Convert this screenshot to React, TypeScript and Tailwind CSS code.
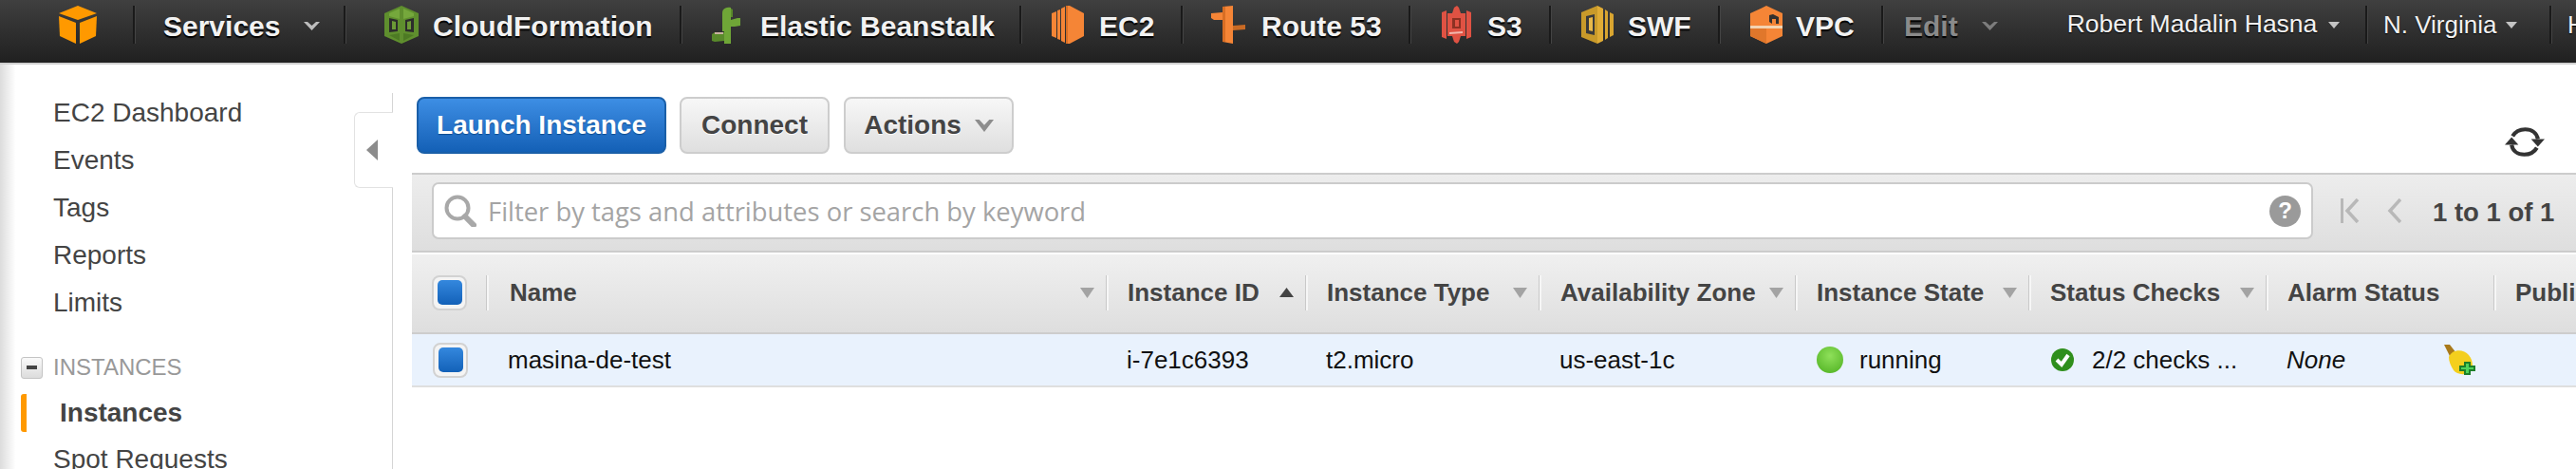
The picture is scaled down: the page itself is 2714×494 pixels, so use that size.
import type { ReactNode } from "react";

function Cube() {
  return (
    <svg width="40" height="40" viewBox="0 0 40 40">
      <path d="M20 0 L40 8 L20 15 L0 8 Z" fill="#f90" />
      <path d="M0 11 L18 18 V40 L1 32 Z" fill="#f90" />
      <path d="M40 11 L22 18 V40 L39 32 Z" fill="#f90" />
    </svg>
  );
}

function CloudFormationIcon() {
  return (
    <svg width="36" height="40" viewBox="0 0 36 40">
      <path d="M18 0 L36 8 V32 L18 40 L0 32 V8 Z" fill="#5f8f2e" />
      <path d="M16 3 V14 L5 11 V8 Z M20 3 V14 L31 11 V8 Z" fill="#75a83c" />
      <path d="M5 13 L14 15 V27 L5 28 Z M22 15 L31 13 V28 L22 27 Z" fill="#2c2c2c" />
      <path d="M8 16 L12 17 V25 L8 25 Z M24 17 L28 16 V25 L24 25 Z" fill="#6c9a36" />
      <path d="M16 29 L5 31 L16 37 Z M20 29 L31 31 L20 37 Z" fill="#4d7a24" />
    </svg>
  );
}

function BeanstalkIcon() {
  return (
    <svg width="30" height="40" viewBox="0 0 30 40">
      <path d="M11 8 C11 3 15 1 20 2 L20 40 L13 40 L13 27 L11 27 Z" fill="#6fa637" />
      <path d="M20 3 L22 4 V12 L20 12 Z" fill="#598a2b" />
      <path d="M20 15 L27 13 H30 V21 L24 22 L20 22 Z" fill="#6fa637" />
      <path d="M0 30 L3 28 H13 V37 L3 38 L0 37 Z" fill="#598a2b" />
      <path d="M3 28 H12 L12 30 H3 Z" fill="#c9b2a0" />
    </svg>
  );
}

function Ec2Icon() {
  return (
    <svg width="34" height="40" viewBox="0 0 34 40">
      <path d="M15 0 L19 0 L34 8 V32 L19 40 L15 40 Z" fill="#f58536" />
      <path d="M10 3 L14 1 V39 L10 37 Z M6 5 L9 4 V36 L6 35 Z M0 8 L5 6 V34 L0 32 Z" fill="#f58536" />
      <path d="M15 0 L17 0 V40 L15 40 Z" fill="#d86e24" />
    </svg>
  );
}

function RouteIcon() {
  return (
    <svg width="36" height="40" viewBox="0 0 36 40">
      <path d="M12 1 L23 0 V40 L12 38 Z" fill="#f58536" />
      <path d="M0 8 L12 7 V15 L3 15 L0 13 Z" fill="#f58536" />
      <path d="M23 21 L36 20 V25 L23 26 Z" fill="#c96a24" />
      <path d="M12 1 L15 1 V38 L12 38 Z" fill="#d86e24" />
    </svg>
  );
}

function S3Icon() {
  return (
    <svg width="31" height="40" viewBox="0 0 31 40">
      <path d="M0 7 L5 5 V35 L0 33 Z M31 7 L26 5 V35 L31 33 Z" fill="#e05243" />
      <path d="M6 8 L11 8 L13 2 L16 0 L18 2 L20 8 H25 V32 H20 L18 38 L16 40 L13 38 L11 32 H6 Z" fill="#e05243" />
      <path d="M11 13 H20 V24 H11 Z" fill="#8c3123" />
      <path d="M14 15 H18 V22 H14 Z" fill="#e05243" />
      <path d="M8 28 L22 27 V29 L8 30 Z" fill="#f2b8ae" />
    </svg>
  );
}

function SwfIcon() {
  return (
    <svg width="34" height="40" viewBox="0 0 34 40">
      <path d="M0 7 L17 0 V40 L0 33 Z" fill="#c99a2a" />
      <path d="M17 0 L23 3 V37 L17 40 Z" fill="#e0ac35" />
      <path d="M25 4 L28 6 V34 L25 36 Z M30 7 L34 9 V31 L30 33 Z" fill="#d9a530" />
      <path d="M5 11 L14 9 V31 L5 29 Z" fill="#3a3a3a" />
      <path d="M8 13 L12 12 V27 L8 26 Z" fill="#e8b94a" />
    </svg>
  );
}

function VpcIcon() {
  return (
    <svg width="34" height="40" viewBox="0 0 34 40">
      <path d="M11 3 L17 0 L34 8 V32 L17 40 L0 32 V8 L11 3 Z" fill="#f58536" />
      <path d="M17 0 V21 H0 V32 L17 40 Z" fill="#e0772b" />
      <path d="M20 17 V10 L24 9 L30 12 V19 H27 V14 H23 V19 Z" fill="#33302e" />
      <path d="M0 21 H34 V24 H0 Z" fill="#f4d3b0" />
    </svg>
  );
}

function Chevron({ color = "#c8c8c8", w = 17, h = 9 }: { color?: string; w?: number; h?: number }) {
  return (
    <svg width={w} height={h} viewBox="0 0 17 9" preserveAspectRatio="none">
      <path d="M0 0 H4 L8.5 4 L13 0 H17 L8.5 9 Z" fill={color} />
    </svg>
  );
}

function Caret() {
  return (
    <svg width="12" height="7" viewBox="0 0 12 7">
      <path d="M0 0 H12 L6 7 Z" fill="#c4c4c4" />
    </svg>
  );
}

function NavItem({
  icon,
  label,
  width,
  pl,
  gap,
}: {
  icon: ReactNode;
  label: string;
  width: string;
  pl: string;
  gap: string;
}) {
  return (
    <div className={`flex h-[40px] shrink-0 items-center border-l-2 border-[#1a1a1a] shadow-[inset_1px_0_0_#444] ${width} ${pl} ${gap}`}>
      {icon}
      <span className="mt-[3px] text-[30px] font-bold text-[#f2f2f2] [text-shadow:0_2px_1px_#000]">{label}</span>
    </div>
  );
}

function TopBar() {
  return (
    <header className="flex h-[68px] shrink-0 items-start overflow-hidden border-b-2 border-[#cfcfcf] bg-linear-to-b from-[#404040] to-[#202020] pt-[6px]">
      <div className="flex h-[40px] w-[140px] shrink-0 items-center pl-[62px]">
        <Cube />
      </div>
      <div className="flex h-[40px] w-[222px] shrink-0 items-center border-l-2 border-[#1a1a1a] pl-[30px] shadow-[inset_1px_0_0_#444]">
        <span className="mt-[3px] text-[30px] font-bold text-[#f2f2f2] [text-shadow:0_2px_1px_#000]">Services</span>
        <span className="ml-[25px] mt-[3px] flex"><Chevron color="#bdbdbd" /></span>
      </div>
      <NavItem icon={<CloudFormationIcon />} label="CloudFormation" width="w-[354px]" pl="pl-[41px]" gap="gap-[15px]" />
      <NavItem icon={<BeanstalkIcon />} label="Elastic Beanstalk" width="w-[358px]" pl="pl-[32px]" gap="gap-[21px]" />
      <NavItem icon={<Ec2Icon />} label="EC2" width="w-[170px]" pl="pl-[32px]" gap="gap-[16px]" />
      <NavItem icon={<RouteIcon />} label="Route 53" width="w-[240px]" pl="pl-[30px]" gap="gap-[17px]" />
      <NavItem icon={<S3Icon />} label="S3" width="w-[148px]" pl="pl-[33px]" gap="gap-[17px]" />
      <NavItem icon={<SwfIcon />} label="SWF" width="w-[178px]" pl="pl-[32px]" gap="gap-[15px]" />
      <NavItem icon={<VpcIcon />} label="VPC" width="w-[172px]" pl="pl-[32px]" gap="gap-[14px]" />
      <div className="flex h-[40px] w-[510px] shrink-0 items-center border-l-2 border-[#1a1a1a] pl-[22px] shadow-[inset_1px_0_0_#444]">
        <span className="mt-[3px] text-[30px] font-bold text-[#8a8a8a] [text-shadow:0_2px_1px_#000]">Edit</span>
        <span className="ml-[25px] mt-[3px] flex"><Chevron color="#7c7c7c" /></span>
        <span className="ml-[73px] text-[26.5px] text-[#f2f2f2] [text-shadow:0_1px_1px_#000]">Robert Madalin Hasna</span>
        <span className="ml-[12px] flex"><Caret /></span>
      </div>
      <div className="flex h-[40px] w-[194px] shrink-0 items-center border-l-2 border-[#1a1a1a] pl-[17px] shadow-[inset_1px_0_0_#444]">
        <span className="text-[26px] text-[#f2f2f2] [text-shadow:0_1px_1px_#000]">N. Virginia</span>
        <span className="ml-[10px] flex"><Caret /></span>
      </div>
      <div className="flex h-[40px] shrink-0 items-center border-l-2 border-[#1a1a1a] pl-[17px] shadow-[inset_1px_0_0_#444]">
        <span className="text-[26px] text-[#f2f2f2] [text-shadow:0_1px_1px_#000]">Help</span>
      </div>
    </header>
  );
}

function SideLink({ label }: { label: string }) {
  return <div className="flex h-[50px] items-center pl-[56px] text-[28px] text-[#444]">{label}</div>;
}

function Sidebar() {
  return (
    <aside className="relative w-[414px] shrink-0 bg-linear-to-r from-[#dcdcdc] via-white via-[4%] to-white pt-[26px]">
      <SideLink label="EC2 Dashboard" />
      <SideLink label="Events" />
      <SideLink label="Tags" />
      <SideLink label="Reports" />
      <SideLink label="Limits" />
      <div className="mb-[3px] mt-[22px] flex h-[42px] items-center gap-[11px] pl-[22px]">
        <span className="flex h-[23px] w-[23px] items-center justify-center rounded-[3px] border border-[#c4c4c4] bg-linear-to-b from-[#fafafa] to-[#dcdcdc]">
          <span className="h-[4px] w-[11px] bg-[#444]" />
        </span>
        <span className="text-[24px] text-[#999]">INSTANCES</span>
      </div>
      <div className="flex h-[48px] items-center pl-[22px]">
        <span className="h-[40px] w-[6px] rounded-l-[3px] bg-[#f90]" />
        <span className="ml-[35px] text-[28px] font-bold text-[#444]">Instances</span>
      </div>
      <SideLink label="Spot Requests" />

      {/* divider starts below the top of the column */}
      <div className="absolute bottom-0 right-0 top-[30px] w-px bg-[#d5d5d5]" />
      <div className="absolute left-[373px] top-[50px] flex h-[80px] w-[41px] items-center justify-center rounded-l-[6px] border border-r-0 border-[#e2e2e2] bg-white">
        <svg width="12" height="22" viewBox="0 0 12 22" className="mr-[4px]">
          <path d="M12 0 V22 L0 11 Z" fill="#8c8c8c" />
        </svg>
      </div>
    </aside>
  );
}

function ToolButton({ children }: { children: ReactNode }) {
  return (
    <button className="flex h-[60px] items-center rounded-[8px] border-2 border-[#cdcdcd] bg-linear-to-b from-[#f7f7f7] to-[#dfdfdf] text-[28px] font-bold text-[#444] [text-shadow:0_1px_0_#fff]">
      {children}
    </button>
  );
}

function Toolbar() {
  return (
    <div className="flex h-[114px] shrink-0 items-start justify-between pl-[5px] pr-[33px] pt-[34px]">
      <div className="flex">
        <button className="flex h-[60px] w-[263px] items-center justify-center rounded-[8px] border-2 border-[#1a5fa8] bg-linear-to-b from-[#3d8ee4] to-[#1360b6] text-[28px] font-bold text-white [text-shadow:0_1px_1px_#0d4a8c]">
          Launch Instance
        </button>
        <div className="ml-[14px]">
          <ToolButton>
            <span className="w-[154px] text-center">Connect</span>
          </ToolButton>
        </div>
        <div className="ml-[15px]">
          <ToolButton>
            <span className="flex w-[175px] items-center justify-center gap-[14px]">
              Actions
              <Chevron color="#8d8d8d" w={20} h={13} />
            </span>
          </ToolButton>
        </div>
      </div>
      <svg width="42" height="33" viewBox="0 0 41 32" className="mt-[31px]" fill="none">
        <path d="M8 10 C11 5 16 3 21 3 C28 3 33 7 34 13" stroke="#333" strokeWidth="4" />
        <path d="M27 13 H41 L34 21 Z" fill="#333" />
        <path d="M33 22 C30 27 25 29 20 29 C13 29 8 25 7 19" stroke="#333" strokeWidth="4" />
        <path d="M0 19 H14 L7 11 Z" fill="#333" />
      </svg>
    </div>
  );
}

function FilterBar() {
  return (
    <div className="flex h-[84px] shrink-0 items-start border-y-2 border-[#cccccc] bg-linear-to-b from-[#ededed] to-[#dedede] pl-[21px] pt-[8px]">
      <div className="flex h-[60px] w-[1982px] shrink-0 items-center rounded-[7px] border-2 border-[#cbcbcb] bg-white pl-[11px] pr-[11px]">
        <svg width="34" height="34" viewBox="0 0 34 34" fill="none">
          <circle cx="14" cy="14" r="11.5" stroke="#a8a8a8" strokeWidth="4" />
          <path d="M22 23 L31 32" stroke="#a8a8a8" strokeWidth="6" strokeLinecap="round" />
        </svg>
        <span className="ml-[12px] mt-[2px] flex-1 font-['Open_Sans',sans-serif] text-[27.4px] text-[#a4a4a4]">
          Filter by tags and attributes or search by keyword
        </span>
        <span className="flex h-[33px] w-[33px] items-center justify-center rounded-full bg-[#9a9a9a] text-[24px] font-bold text-white">?</span>
      </div>
      <div className="flex h-[60px] items-center">
        <svg width="20" height="26" viewBox="0 0 20 26" className="ml-[29px]" fill="none">
          <path d="M1.5 0 V26" stroke="#b8b8b8" strokeWidth="3" />
          <path d="M18 1 L7 13 L18 25" stroke="#b8b8b8" strokeWidth="3.5" />
        </svg>
        <svg width="15" height="26" viewBox="0 0 15 26" className="ml-[29px]" fill="none">
          <path d="M14 1 L3 13 L14 25" stroke="#b8b8b8" strokeWidth="3.5" />
        </svg>
        <span className="ml-[33px] mt-[3px] whitespace-nowrap text-[27.5px] font-bold text-[#444]">1 to 1 of 1</span>
      </div>
    </div>
  );
}

function BlueCheck() {
  return (
    <span className="flex h-[37px] w-[37px] items-center justify-center rounded-[8px] border-2 border-[#d2d2d2] bg-[#f4f4f4]">
      <span className="h-[26px] w-[26px] rounded-[5px] bg-linear-to-b from-[#3488de] to-[#1261b8]" />
    </span>
  );
}

function SortArrow({ up = false }: { up?: boolean }) {
  if (up) {
    return (
      <svg width="15" height="10" viewBox="0 0 15 10" className="shrink-0">
        <path d="M7.5 0 L15 10 H0 Z" fill="#444" />
      </svg>
    );
  }
  return (
    <svg width="15" height="11" viewBox="0 0 15 11" className="shrink-0">
      <path d="M0 0 H15 L7.5 11 Z" fill="#a3a3a3" />
    </svg>
  );
}

function HeadCell({ label, sort }: { label: string; sort?: "up" | "down" }) {
  return (
    <div className="flex h-[37px] items-center justify-between overflow-hidden whitespace-nowrap border-l-2 border-[#f6f6f6] pl-[20px] pr-[13px] text-[26px] font-bold text-[#444] shadow-[-1px_0_0_#c9c9c9]">
      <span>{label}</span>
      {sort && <SortArrow up={sort === "up"} />}
    </div>
  );
}

const columns = "grid grid-cols-[79px_653px_210px_246px_270px_246px_250px_240px_1fr]";

function InstanceTable() {
  return (
    <div className="mt-[2px]">
      <div className={`${columns} h-[84px] items-center border-b-2 border-[#cdcdcd] bg-linear-to-b from-[#f0f0f0] to-[#dedede] pb-[2px]`}>
        <div className="pl-[21px]"><BlueCheck /></div>
        <div className="flex h-[37px] items-center justify-between border-l-2 border-[#f6f6f6] pl-[22px] pr-[13px] text-[26px] font-bold text-[#444] shadow-[-1px_0_0_#c9c9c9]">
          <span>Name</span>
          <SortArrow />
        </div>
        <HeadCell label="Instance ID" sort="up" />
        <HeadCell label="Instance Type" sort="down" />
        <HeadCell label="Availability Zone" sort="down" />
        <HeadCell label="Instance State" sort="down" />
        <HeadCell label="Status Checks" sort="down" />
        <HeadCell label="Alarm Status" />
        <HeadCell label="Public DNS" />
      </div>
      <div className={`${columns} h-[56px] items-center border-b-2 border-[#dfdfdf] bg-[#e9f2fd] text-[26px] text-[#111]`}>
        <div className="pl-[22px]"><BlueCheck /></div>
        <div className="pl-[22px]">masina-de-test</div>
        <div className="pl-[21px]">i-7e1c6393</div>
        <div className="pl-[21px]">t2.micro</div>
        <div className="pl-[21px]">us-east-1c</div>
        <div className="flex items-center gap-[17px] pl-[22px]">
          <span className="h-[28px] w-[28px] rounded-full bg-[radial-gradient(circle_at_50%_35%,#8fe05a,#4caf1f)]" />
          running
        </div>
        <div className="flex items-center gap-[19px] whitespace-nowrap pl-[23px]">
          <svg width="24" height="24" viewBox="0 0 24 24" className="shrink-0">
            <circle cx="12" cy="12" r="12" fill="#2f8f1c" />
            <path d="M6 12 L11 17 L18 7" stroke="#fff" strokeWidth="4" fill="none" />
          </svg>
          2/2 checks ...
        </div>
        <div className="flex items-center justify-between pl-[21px] pr-[20px]">
          <span className="italic">None</span>
          <svg width="33" height="32" viewBox="0 0 33 32">
            <path d="M0 0 L6 0 L13 9 L7 14 Z" fill="#a8791a" />
            <path d="M5 13 C9 4 21 5 26 11 C31 17 31 25 27 29 C21 33 13 31 10 27 C7 22 5 18 5 13 Z" fill="#f4cf1d" />
            <path d="M21 18 H28 V22 H33 V28 H28 V32 H21 V28 H16 V22 H21 Z" fill="#1d7f2a" />
            <path d="M23 20 H26 V24 H31 V26 H26 V30 H23 V26 H18 V24 H23 Z" fill="#4fd45a" />
          </svg>
        </div>
        <div />
      </div>
    </div>
  );
}

export default function App() {
  return (
    <div className="flex h-[494px] w-[2714px] flex-col overflow-hidden bg-white font-['Liberation_Sans',Arial,sans-serif]">
      <TopBar />
      <div className="flex min-h-0 flex-1">
        <Sidebar />
        <main className="min-w-0 flex-1 pl-[20px]">
          <Toolbar />
          <FilterBar />
          <InstanceTable />
        </main>
      </div>
    </div>
  );
}
